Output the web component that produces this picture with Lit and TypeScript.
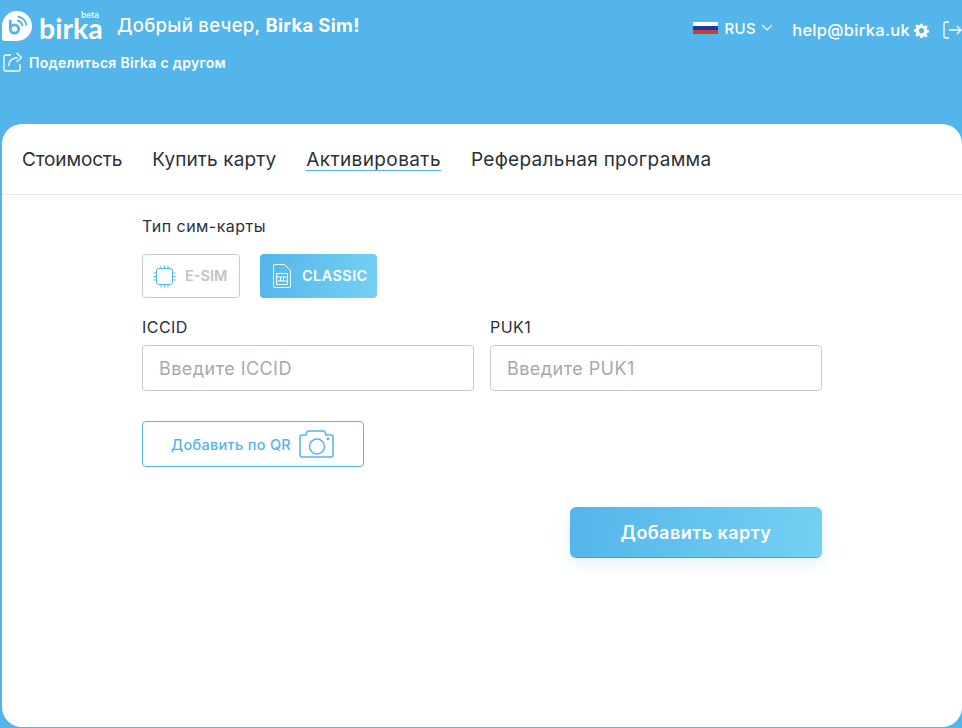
import { LitElement, html, css } from "lit";
import { customElement } from "lit/decorators.js";

@customElement("app-root")
export class AppRoot extends LitElement {
  static styles = css`
    :host { display: block; width: 962px; height: 728px; background: #53b5ea; font-family: Inter, "Noto Sans", sans-serif; color: #2a3138; overflow: hidden; }
    * { box-sizing: border-box; }
    .header { height: 124px; padding: 11px 0 0 2px; color: #fff; display: flex; flex-direction: column; }
    .top { display: flex; align-items: center; height: 30px; }
    .logo { display: flex; align-items: center; width: 115px; position: relative; }
    .word { font-family: Lato, sans-serif; font-size: 28.500px; font-weight: 700; line-height: 20px; margin: 4px 0 0 7px; }
    .beta { position: absolute; left: 79px; top: 1px; font-size: 8.500px; line-height: 7px; font-weight: 500; }
    .greet { font-size: 18.500px; letter-spacing: .3px; font-weight: 500; margin-top: -2px; }
    .greet b { font-weight: 700; }
    .right { margin-left: auto; display: flex; align-items: center; padding-top: 8px; }
    .flag { width: 25px; height: 13px; display: flex; flex-direction: column; margin-right: 6px; margin-top: -4px; }
    .flag i { flex: 1; display: block; }
    .lang { font-size: 15px; letter-spacing: .4px; font-weight: 500; margin-top: -4px; }
    .chev { margin: -4px 0 0 5px; }
    .mail { font-size: 16.500px; letter-spacing: .3px; font-weight: 500; margin-left: 19px; }
    .gear { margin-left: 4px; }
    .exit { margin: 0 0 0 14px; }
    .share { display: flex; align-items: center; gap: 6px; font-size: 14px; letter-spacing: .3px; font-weight: 600; margin-top: 11px; padding-left: 1px; }
    .card { width: 960px; height: 603px; margin-left: 2px; background: #fff; border-radius: 20px; }
    .tabs { height: 71px; border-bottom: 1px solid #e4e8ee; display: flex; gap: 30px; padding: 22px 0 0 20px; font-size: 19px; font-weight: 400; }
    .tab { height: 25px; line-height: 27px; letter-spacing: .3px; }
    .tab.first { letter-spacing: -.15px; }
    .tab.second { letter-spacing: .1px; }
    .tab.on { border-bottom: 1px solid #53b5ea; letter-spacing: .4px; }
    .form { padding: 20px 0 0 140px; width: 820px; display: flex; flex-direction: column; }
    .lbl { font-size: 16px; letter-spacing: .45px; line-height: 22px; }
    .types { display: flex; gap: 20px; margin-top: 17px; }
    .type { height: 44px; border-radius: 4px; display: flex; align-items: center; font-size: 14.500px; font-weight: 600; line-height: 20px; }
    .type span { margin-top: -1px; }
    .esim { width: 98px; border: 1px solid #c9cccf; color: #bfc3c7; padding-left: 10px; gap: 9px; }
    .classic { width: 117px; background: linear-gradient(100deg, #53b5ea, #75d0f3); color: #fff; padding-left: 13px; gap: 11px; letter-spacing: .4px; }
    .fields { display: grid; grid-template-columns: 332px 332px; column-gap: 16px; margin-top: 18px; }
    .field { display: flex; flex-direction: column; gap: 7px; }
    .input { height: 46px; border: 1px solid #c9cccf; border-radius: 4px; font-size: 18px; letter-spacing: .45px; color: #a6a9ac; padding: 1px 0 0 16px; display: flex; align-items: center; }
    .qr { width: 222px; height: 46px; margin-top: 30px; border: 1px solid #53b5ea; border-radius: 4px; display: flex; align-items: center; padding-left: 28px; gap: 8px; color: #53b5ea; font-size: 14.500px; letter-spacing: .3px; font-weight: 500; }
    .add { align-self: flex-end; width: 252px; height: 50px; margin-top: 40px; border-radius: 6px; background: linear-gradient(100deg, #53b5ea, #75d0f3); color: #fff; font-size: 18px; letter-spacing: .45px; font-weight: 600; display: flex; align-items: center; justify-content: center; box-shadow: 0 1px 0 #4a9fcf, 0 6px 16px rgba(83,181,234,.18); }
  `;

  render() {
    return html`
      <div class="header">
        <div class="top">
          <div class="logo">
            <svg width="30" height="30" viewBox="0 0 30 30">
              <path d="M0 15A15 15 0 1 1 15 30H3a3 3 0 0 1-3-3Z" fill="#fff"/>
              <circle cx="12.500" cy="18" r="4.200" fill="none" stroke="#53b5ea" stroke-width="2.800"/>
              <path d="M8.300 9v9" stroke="#53b5ea" stroke-width="2.800"/>
              <path d="M15 9.500a6.500 6.500 0 0 1 5.500 5.500M15.500 5.500a10 10 0 0 1 9 9" fill="none" stroke="#53b5ea" stroke-width="2"/>
            </svg>
            <span class="word">birka</span>
            <span class="beta">beta</span>
          </div>
          <div class="greet">Добрый вечер, <b>Birka Sim!</b></div>
          <div class="right">
            <span class="flag"><i style="background:#fff"></i><i style="background:#1c39a6"></i><i style="background:#c8402f"></i></span>
            <span class="lang">RUS</span>
            <svg class="chev" width="12" height="8" viewBox="0 0 12 8"><path d="M1 1l5 5 5-5" fill="none" stroke="#fff" stroke-width="1.100"/></svg>
            <span class="mail">help@birka.uk</span>
            <svg class="gear" width="15" height="15" viewBox="0 0 24 24"><path fill="#fff" fill-rule="evenodd" d="M10 1h4l.6 3.200 1.900.8 2.700-1.800 2.800 2.800-1.800 2.700.8 1.900L24 11v4l-3.200.6-.8 1.900 1.800 2.700-2.800 2.800-2.700-1.800-1.900.8L14 24h-4l-.6-3.200-1.900-.8-2.700 1.800L2 19l1.800-2.700-.8-1.900L0 14v-4l3.200-.6.8-1.900L2.200 4.800 5 2l2.700 1.800 1.900-.8ZM12 8a4.200 4.200 0 1 0 0 8.400A4.200 4.200 0 0 0 12 8Z"/></svg>
            <svg class="exit" width="19" height="18" viewBox="0 0 19 18"><path d="M6 1H3a2 2 0 0 0-2 2v12a2 2 0 0 0 2 2h3M6 9h12M14 5l4 4-4 4" fill="none" stroke="#fff" stroke-width="1.300"/></svg>
          </div>
        </div>
        <div class="share">
          <svg width="20" height="20" viewBox="0 0 20 20"><path d="M8 3H3a2 2 0 0 0-2 2v12a2 2 0 0 0 2 2h12a2 2 0 0 0 2-2v-5M5.500 14c.5-5 4-8 9-8.500M13.500 1l5 4.500-5 4.500" fill="none" stroke="#fff" stroke-width="1.300"/></svg>
          Поделиться Birka с другом
        </div>
      </div>
      <div class="card">
        <div class="tabs">
          <div class="tab first">Стоимость</div>
          <div class="tab second">Купить карту</div>
          <div class="tab on">Активировать</div>
          <div class="tab">Реферальная программа</div>
        </div>
        <div class="form">
          <div class="lbl">Тип сим-карты</div>
          <div class="types">
            <div class="type esim">
              <svg width="23" height="25" viewBox="0 0 23 25" fill="none" stroke="#53b5ea" stroke-width="1"><rect x="3.500" y="4.500" width="16" height="16" rx="2.500"/><path d="M8 1.500v3M11.500 1.500v3M15 1.500v3M8 20.500v3M11.500 20.500v3M15 20.500v3M.5 9h3M.5 12.500h3M.5 16h3M19.500 9h3M19.500 12.500h3M19.500 16h3"/></svg>
              <span>E-SIM</span>
            </div>
            <div class="type classic">
              <svg width="18" height="24" viewBox="0 0 18 24" fill="none" stroke="#fff" stroke-width="1"><path d="M2 .5h9.500l6 6V22a1.500 1.500 0 0 1-1.500 1.500H2A1.500 1.500 0 0 1 .5 22V2A1.500 1.500 0 0 1 2 .5Z"/><rect x="3.500" y="9.500" width="11" height="11"/><path d="M3.500 13h11M3.500 17h11M7.500 13v4M10.500 13v4"/></svg>
              <span>CLASSIC</span>
            </div>
          </div>
          <div class="fields">
            <div class="field"><div class="lbl">ICCID</div><div class="input">Введите ICCID</div></div>
            <div class="field"><div class="lbl">PUK1</div><div class="input">Введите PUK1</div></div>
          </div>
          <div class="qr">
            Добавить по QR
            <svg width="35" height="28" viewBox="0 0 35 28" fill="none" stroke="#53b5ea" stroke-width="1.500"><path d="M3 5h4l1-3a1.500 1.500 0 0 1 1.500-1h15a1.500 1.500 0 0 1 1.500 1l1 3h5a2 2 0 0 1 2 2v18a2 2 0 0 1-2 2H3a2 2 0 0 1-2-2V7a2 2 0 0 1 2-2Z"/><circle cx="18" cy="16.500" r="7.500"/><circle cx="29" cy="9" r=".7"/></svg>
          </div>
          <div class="add">Добавить карту</div>
        </div>
      </div>
    `;
  }
}
